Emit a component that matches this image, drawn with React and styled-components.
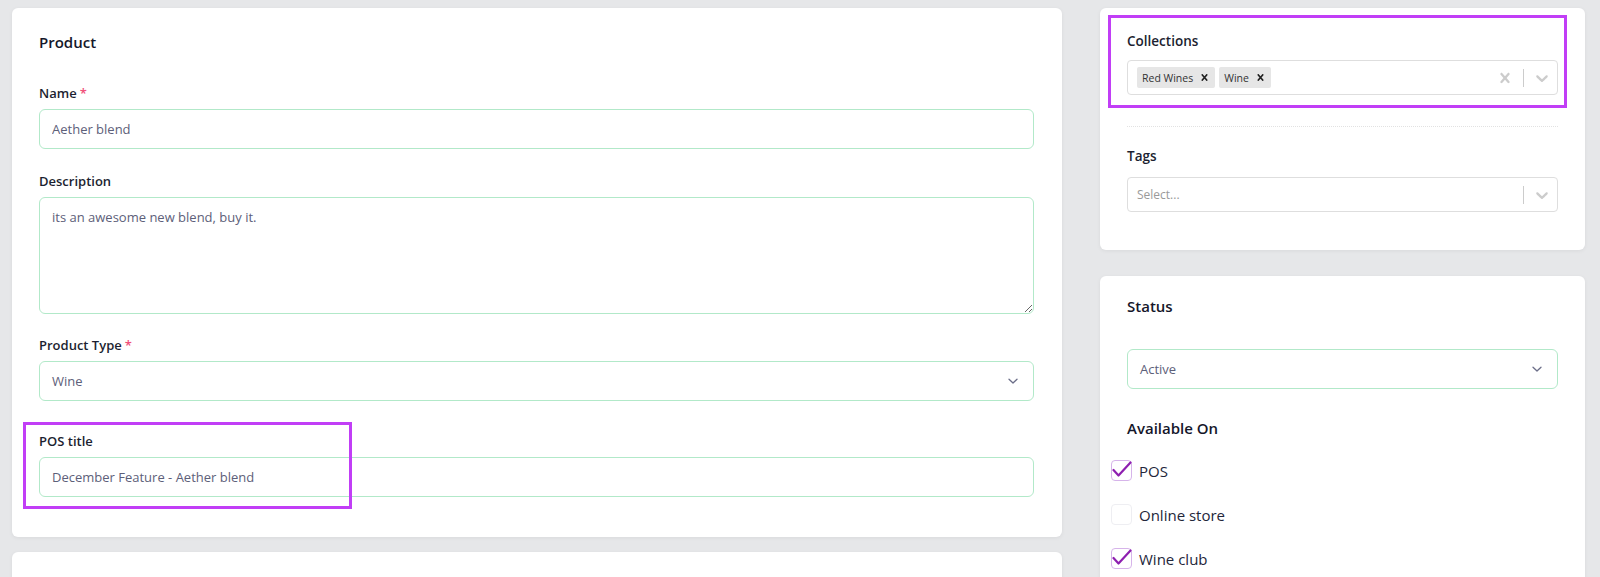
import React from 'react';
import styled, { createGlobalStyle } from 'styled-components';

const GlobalStyle = createGlobalStyle`
  body {
    margin: 0;
    background: #e6e7e9;
    font-family: "Open Sans", "Noto Sans", sans-serif;
  }
`

const Page = styled.div`
  display: grid;
  grid-template-columns: 1050px 485px;
  column-gap: 38px;
  padding: 8px 15px 0 12px;
  height: 569px;
  overflow: hidden;
`
const Column = styled.div`
  display: flex;
  flex-direction: column;
  gap: ${(props) => props.gap || '15px'};
`
const Card = styled.div`
  display: flex;
  flex-direction: column;
  background: #fff;
  border-radius: 6px;
  box-shadow: 0 1px 4px rgba(0, 0, 0, 0.06);
  padding: ${(props) => props.padding || '22px 28px 40px 27px'};
  min-height: ${(props) => props.min_height || 'auto'};
`
const CardTitle = styled.div`
  font-size: 15px;
  font-weight: 570;
  line-height: 24px;
  color: #15172a;
  margin-top: ${(props) => props.margin_top || '0'};
  margin-bottom: ${(props) => props.marginbottom || '30px'};
`
const Field = styled.div`
  position: relative;
  margin-top: ${(props) => props.margin_top || '0'};
  margin-bottom: ${(props) => props.marginbottom || '23px'};
`
const Label = styled.div`
  font-size: ${(props) => props.fontsize || '13px'};
  font-weight: 560;
  line-height: 18px;
  color: #1c1f31;
  margin-bottom: ${(props) => props.marginbottom || '7px'};
`
const Star = styled.span`
  color: #f0507a;
  margin-left: 3px;
`
const TextInput = styled.input`
  display: block;
  box-sizing: border-box;
  width: 100%;
  height: 40px;
  border: 1px solid #b2e9c9;
  border-radius: 6px;
  padding: 0 12px;
  font-family: inherit;
  font-size: 13px;
  color: #5d6079;
  outline: none;
  background: #fff;
`
const TextArea = styled.textarea`
  display: block;
  box-sizing: border-box;
  width: 100%;
  height: 117px;
  border: 1px solid #b2e9c9;
  border-radius: 6px;
  padding: 10px 12px;
  font-family: inherit;
  font-size: 13px;
  line-height: 18px;
  color: #5d6079;
  outline: none;
`
const SelectBox = styled.div`
  display: flex;
  align-items: center;
  justify-content: space-between;
  box-sizing: border-box;
  height: 40px;
  border: 1px solid #b2e9c9;
  border-radius: 6px;
  padding: 0 14px 0 12px;
  font-size: 13px;
  color: #5d6079;
`
const Annotation = styled.div`
  position: absolute;
  left: ${(props) => props.left};
  top: ${(props) => props.top};
  width: ${(props) => props.width};
  height: ${(props) => props.height};
  box-sizing: border-box;
  border: 3px solid #c13ef6;
  pointer-events: none;
`
const MultiControl = styled.div`
  display: flex;
  align-items: center;
  box-sizing: border-box;
  height: ${(props) => props.height || '35px'};
  border: 1px solid #dedede;
  border-radius: 4px;
  padding-left: 9px;
`
const Values = styled.div`
  flex: 1;
  display: flex;
  align-items: center;
  gap: 4px;
`
const Chip = styled.div`
  display: flex;
  align-items: center;
  height: 21px;
  background: #e6e6e6;
  border-radius: 2px;
  padding-left: 5px;
  font-size: 10.5px;
  color: #333;
`
const ChipRemove = styled.span`
  display: flex;
  align-items: center;
  padding: 0 4px 0 5px;
`
const Placeholder = styled.div`
  font-size: 12px;
  color: #9a9a9a;
`
const Indicators = styled.div`
  display: flex;
  align-items: center;
  align-self: stretch;
`
const Indicator = styled.div`
  display: flex;
  align-items: center;
  padding: ${(props) => props.padding || '0 8px'};
  color: #cccccc;
`
const Separator = styled.span`
  width: 1px;
  height: 18px;
  background: #cccccc;
`
const Divider = styled.div`
  border-top: 1px dotted #e2e2e2;
  margin: 31px 0 20px;
`
const CheckRow = styled.div`
  display: flex;
  align-items: center;
  gap: 7px;
  margin-left: -16px;
  height: 21px;
  margin-bottom: 23px;
  font-size: 15px;
  color: #23263a;
`
const Box = styled.span`
  display: flex;
  width: 21px;
  height: 21px;
  box-sizing: border-box;
  border: 1px solid ${(props) => (props.checked ? '#d6b4ea' : '#eeeef2')};
  border-radius: 4px;
  overflow: visible;
`

function Chevron({ size = 12, color = '#6b6e88' }) {
  return (
    <svg width={size} height={size} viewBox="0 0 12 12" fill="none">
      <path d="M2 4.2 L6 8 L10 4.2" stroke={color} strokeWidth="1.3" strokeLinecap="round" strokeLinejoin="round" />
    </svg>
  )
}

function CrossIcon({ size = 20, color = '#ccc' }) {
  return (
    <svg width={size} height={size} viewBox="0 0 20 20" fill={color}>
      <path d="M14.348 14.849c-0.469 0.469-1.229 0.469-1.697 0l-2.651-3.030-2.651 3.029c-0.469 0.469-1.229 0.469-1.697 0-0.469-0.469-0.469-1.229 0-1.697l2.758-3.15-2.759-3.152c-0.469-0.469-0.469-1.228 0-1.697s1.228-0.469 1.697 0l2.652 3.031 2.651-3.031c0.469-0.469 1.228-0.469 1.697 0s0.469 1.229 0 1.697l-2.758 3.152 2.758 3.15c0.469 0.469 0.469 1.229 0 1.698z" />
    </svg>
  )
}

function DownIcon() {
  return (
    <svg width="20" height="20" viewBox="0 0 20 20" fill="#cccccc">
      <path d="M4.516 7.548c0.436-0.446 1.043-0.481 1.576 0l3.908 3.747 3.908-3.747c0.533-0.481 1.141-0.446 1.574 0 0.436 0.445 0.408 1.197 0 1.615-0.406 0.418-4.695 4.502-4.695 4.502-0.217 0.223-0.502 0.335-0.787 0.335s-0.57-0.112-0.789-0.335c0 0-4.287-4.084-4.695-4.502s-0.436-1.170 0-1.615z" />
    </svg>
  )
}

function Checkbox({ checked, label }) {
  return (
    <CheckRow>
      <Box checked={checked}>
        {checked && (
          <svg width="21" height="21" viewBox="0 0 21 21" fill="none" style={{ margin: '-1px' }}>
            <path d="M2.5 10 L7.5 15.5 L19.5 2.5" stroke="#8e1fb0" strokeWidth="2.2" strokeLinecap="round" strokeLinejoin="round" />
          </svg>
        )}
      </Box>
      {label}
    </CheckRow>
  )
}

export default function App() {
  return (
    <>
      <GlobalStyle />
      <Page>
        <Column>
          <Card>
            <CardTitle>Product</CardTitle>
            <Field>
              <Label>Name<Star>*</Star></Label>
              <TextInput defaultValue="Aether blend" />
            </Field>
            <Field marginbottom="22px">
              <Label>Description</Label>
              <TextArea defaultValue="its an awesome new blend, buy it." />
            </Field>
            <Field>
              <Label>Product Type<Star>*</Star></Label>
              <SelectBox>
                Wine
                <Chevron />
              </SelectBox>
            </Field>
            <Field margin_top="8px" marginbottom="0">
              <Label>POS title</Label>
              <TextInput defaultValue="December Feature - Aether blend" />
              <Annotation left="-16px" top="-10px" width="329px" height="87px" />
            </Field>
          </Card>
          <Card min_height="200px" />
        </Column>

        <Column gap="26px">
          <Card padding="24px 27px 38px 27px">
            <Field marginbottom="0">
              <Label fontsize="13.5px" marginbottom="10px">Collections</Label>
              <MultiControl>
                <Values>
                  <Chip>
                    Red Wines
                    <ChipRemove><CrossIcon size={13} color="#222" /></ChipRemove>
                  </Chip>
                  <Chip>
                    Wine
                    <ChipRemove><CrossIcon size={13} color="#222" /></ChipRemove>
                  </Chip>
                </Values>
                <Indicators>
                  <Indicator padding="0 8px 0 11px"><CrossIcon /></Indicator>
                  <Separator />
                  <Indicator padding="0 5px 0 8px"><DownIcon /></Indicator>
                </Indicators>
              </MultiControl>
              <Annotation left="-19px" top="-17px" width="459px" height="93px" />
            </Field>
            <Divider />
            <Field marginbottom="0">
              <Label fontsize="13.5px" marginbottom="12px">Tags</Label>
              <MultiControl height="35px">
                <Values>
                  <Placeholder>Select...</Placeholder>
                </Values>
                <Indicators>
                  <Separator />
                  <Indicator padding="0 5px 0 8px"><DownIcon /></Indicator>
                </Indicators>
              </MultiControl>
            </Field>
          </Card>

          <Card padding="18px 27px 40px 27px" min_height="400px">
            <CardTitle marginbottom="31px">Status</CardTitle>
            <SelectBox>
              Active
              <Chevron />
            </SelectBox>
            <CardTitle margin_top="27px" marginbottom="20px">Available On</CardTitle>
            <Checkbox checked label="POS" />
            <Checkbox label="Online store" />
            <Checkbox checked label="Wine club" />
          </Card>
        </Column>
      </Page>
    </>
  )
}
